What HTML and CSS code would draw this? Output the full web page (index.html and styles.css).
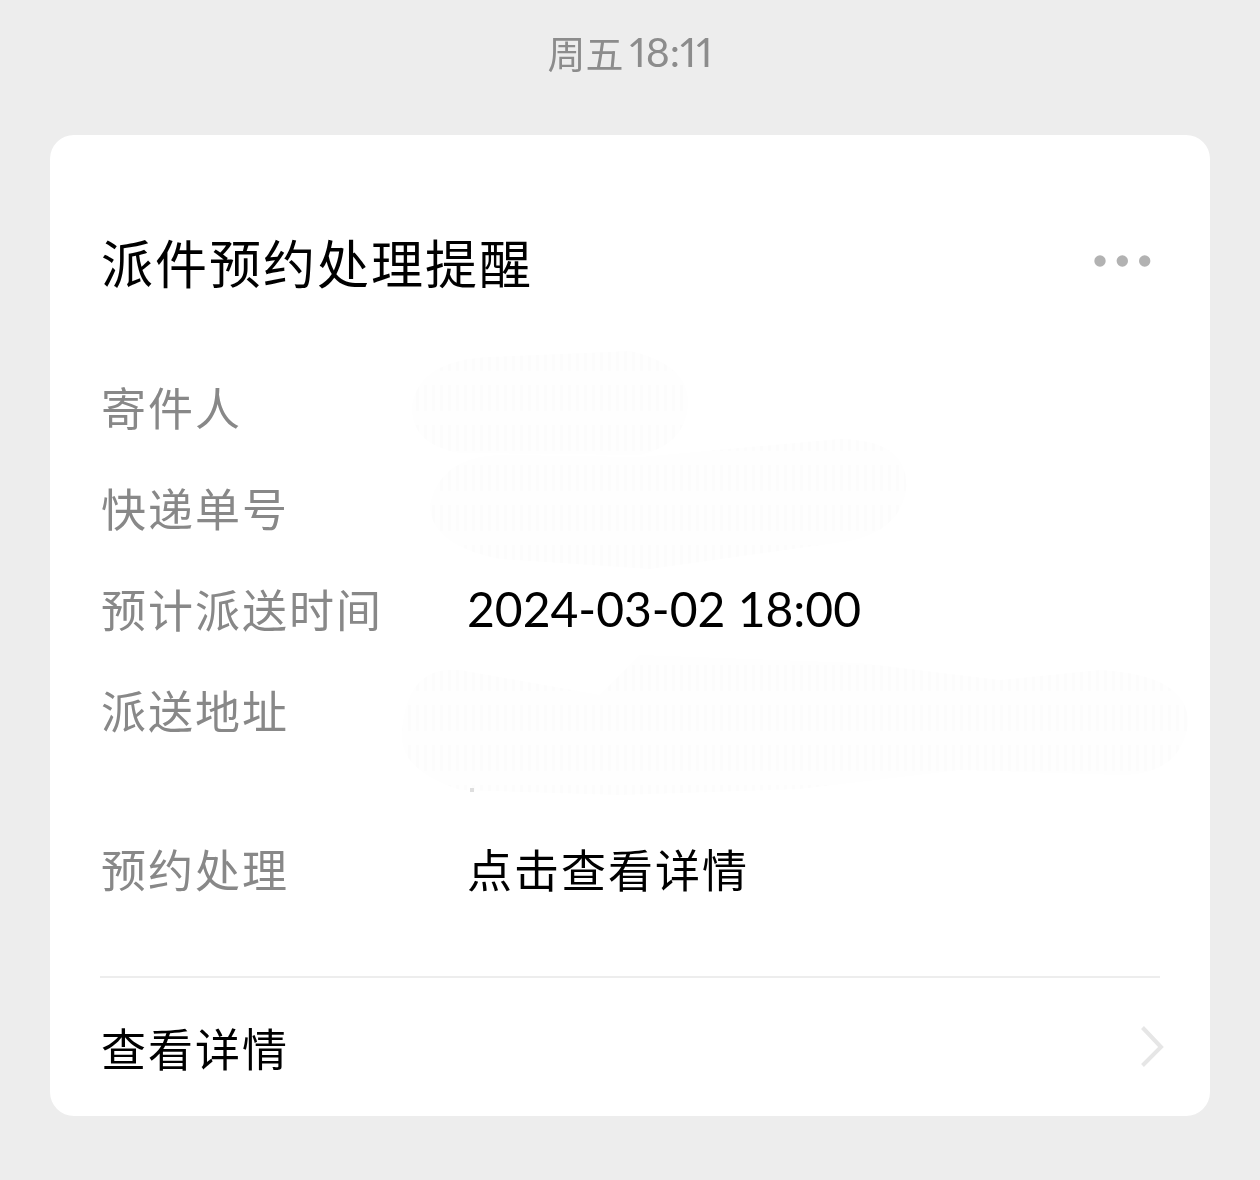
FILE: index.html
```html
<!DOCTYPE html>
<html lang="zh-CN">
<head>
<meta charset="utf-8">
<meta name="viewport" content="width=device-width, initial-scale=1">
<title>派件预约处理提醒</title>
<link rel="stylesheet" href="styles.css">
</head>
<body>
<main class="chat">
  <time class="stamp">周五<span class="stamp-time">18:11</span></time>
  <article class="card">
    <header class="card-head">
      <h1 class="title">派件预约处理提醒</h1>
      <button class="more" type="button" aria-label="更多">
        <svg width="58" height="12" viewBox="0 0 58 12" fill="currentColor"><circle cx="6" cy="6" r="5.700"/><circle cx="28.300" cy="6" r="5.700"/><circle cx="50.700" cy="6" r="5.700"/></svg>
      </button>
    </header>
    <dl class="fields">
      <div class="field"><dt>寄件人</dt><dd></dd></div>
      <div class="field"><dt>快递单号</dt><dd></dd></div>
      <div class="field"><dt>预计派送时间</dt><dd class="date">2024-03-02 18:00</dd></div>
      <div class="field field-address"><dt>派送地址</dt><dd></dd></div>
      <div class="field"><dt>预约处理</dt><dd>点击查看详情</dd></div>
    </dl>
    <a class="detail" href="#detail">
      <span>查看详情</span>
      <svg width="24" height="42" viewBox="0 0 24 42" fill="none" stroke="currentColor" stroke-width="4"><path d="M2.500 1.500 21 21 2.500 39.500"/></svg>
    </a>
    <!-- Faint eraser strokes over the private values -->
    <svg class="erased" width="800" height="460" viewBox="0 0 800 460" aria-hidden="true">
      <defs>
        <pattern id="streaks" width="8" height="40" patternUnits="userSpaceOnUse"><rect width="8" height="40" fill="#fefefe"/><rect width="3" height="26" fill="#fcfcfc"/></pattern>
      </defs>
      <g fill="url(#streaks)">
        <path d="M12 60Q20 15 90 12L230 6Q290 20 288 60 285 100 240 110L60 108Q10 100 12 60Z"/>
        <path d="M30 160Q40 112 100 110L240 112 440 94Q510 95 506 145 500 185 450 196L250 224 100 214Q30 200 30 160Z"/>
        <path d="M2 390Q5 320 60 325L200 350 240 310 460 318 600 335 700 325Q790 330 788 380 780 430 720 430L560 425 400 444 220 450 60 445Q0 425 2 390Z"/>
      </g>
      <rect x="70" y="443" width="4" height="4" fill="#dedede"/>
    </svg>
  </article>
</main>
</body>
</html>
```

FILE: styles.css
```css
* {
  box-sizing: border-box;
}

body {
  margin: 0;
  background: #ededed;
  color: #000;
  font-family: "Noto Sans CJK SC", sans-serif;
}

.chat {
  padding: 22px 50px 64px;
}

.stamp {
  display: flex;
  justify-content: center;
  gap: 6px;
  margin-bottom: 53px;
  color: #8c8c8c;
  font-size: 38px;
  line-height: 60px;
}

.stamp-time {
  font-family: Lato, sans-serif;
  font-size: 41px;
  font-variant-numeric: proportional-nums;
}

.card {
  position: relative;
  padding: 81px 50px 0;
  border-radius: 24px;
  background: #fff;
}

.card-head {
  display: flex;
  align-items: center;
  justify-content: space-between;
  height: 90px;
}

.title {
  margin: 0;
  padding-left: 1px;
  font-size: 52px;
  font-weight: 400;
  letter-spacing: 2px;
}

.more {
  display: flex;
  margin-right: 8px;
  padding: 0;
  border: 0;
  background: none;
  color: #b2b2b2;
}

.fields {
  margin: 50px 0 0;
  padding: 0 0 57px 1px;
  font-size: 45px;
  letter-spacing: 2px;
  line-height: 101px;
}

.field {
  display: grid;
  grid-template-columns: 366px 1fr;
}

.field-address {
  min-height: 159px;
}

.field dt {
  color: #888;
}

.field dd {
  margin: 0;
}

.field .date {
  font-family: Lato, sans-serif;
  font-size: 48px;
  letter-spacing: 0;
}

.detail {
  display: flex;
  align-items: center;
  justify-content: space-between;
  height: 140px;
  padding-left: 1px;
  border-top: 2px solid #ededed;
  color: inherit;
  font-size: 45px;
  letter-spacing: 2px;
  text-decoration: none;
}

.detail svg {
  margin-right: -4px;
  color: #e6e6e6;
}

.erased {
  position: absolute;
  top: 210px;
  left: 350px;
  pointer-events: none;
  mix-blend-mode: multiply;
}
```
